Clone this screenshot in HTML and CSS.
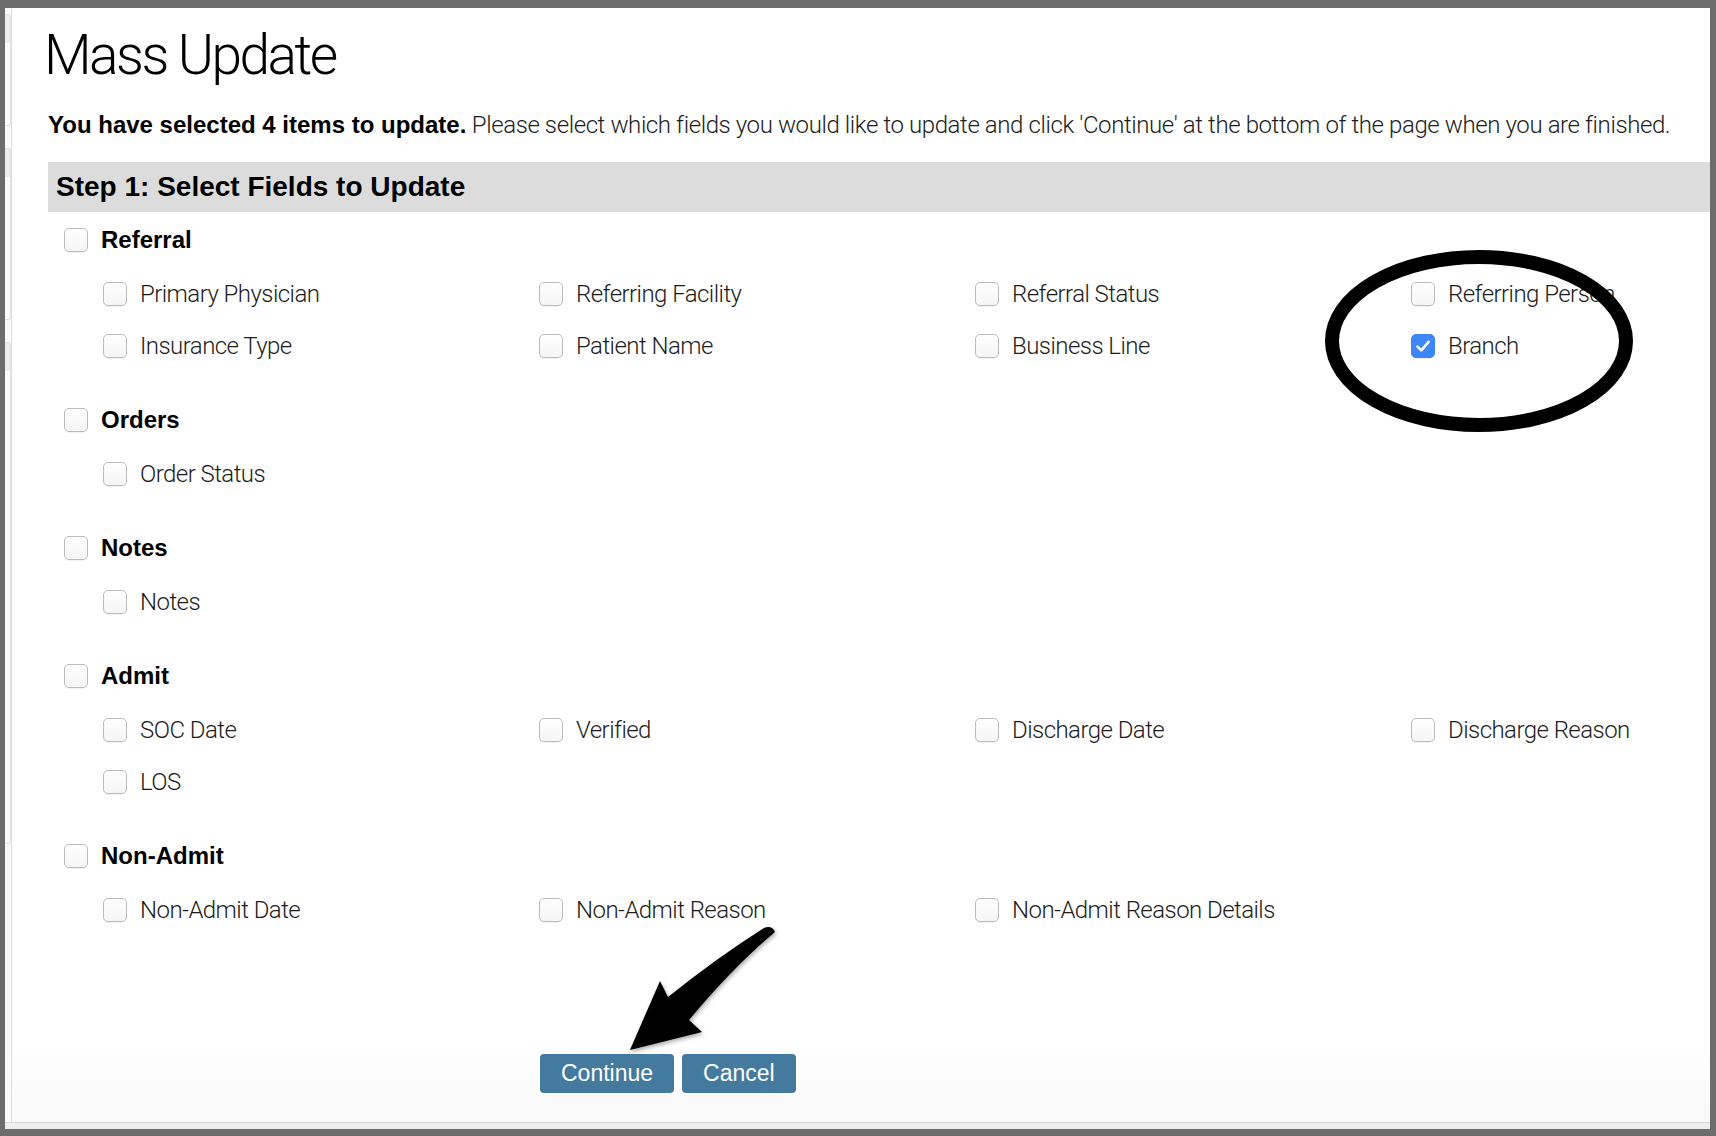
FILE: index.html
```html
<!DOCTYPE html>
<html lang="en">
<head>
<meta charset="utf-8">
<title>Mass Update</title>
<link rel="stylesheet" href="styles.css">
</head>
<body>
<div class="screen">
  <div class="window">
    <div class="edge">
      <span class="edge-tab t1"></span>
      <span class="edge-tab t2"></span>
      <span class="edge-tab t3"></span>
    </div>
    <main class="sheet">
      <h1 class="title">Mass Update</h1>
      <p class="intro"><strong>You have selected 4 items to update.</strong> Please select which fields you would like to update and click 'Continue' at the bottom of the page when you are finished.</p>
      <h2 class="step">Step 1: Select Fields to Update</h2>

      <section class="group">
        <label class="parent"><span class="box"></span>Referral</label>
        <div class="fields">
          <label class="field"><span class="box"></span>Primary Physician</label>
          <label class="field"><span class="box"></span>Referring Facility</label>
          <label class="field"><span class="box"></span>Referral Status</label>
          <label class="field"><span class="box"></span>Referring Person</label>
          <label class="field"><span class="box"></span>Insurance Type</label>
          <label class="field"><span class="box"></span>Patient Name</label>
          <label class="field"><span class="box"></span>Business Line</label>
          <label class="field"><span class="box on"><svg viewBox="0 0 24 24" width="24" height="24"><path d="M6.5 12.6 L10.3 16.4 L17.6 7.8" fill="none" stroke="#fff" stroke-width="2.6" stroke-linecap="round" stroke-linejoin="round"/></svg></span>Branch</label>
        </div>
      </section>

      <section class="group">
        <label class="parent"><span class="box"></span>Orders</label>
        <div class="fields">
          <label class="field"><span class="box"></span>Order Status</label>
        </div>
      </section>

      <section class="group">
        <label class="parent"><span class="box"></span>Notes</label>
        <div class="fields">
          <label class="field"><span class="box"></span>Notes</label>
        </div>
      </section>

      <section class="group">
        <label class="parent"><span class="box"></span>Admit</label>
        <div class="fields">
          <label class="field"><span class="box"></span>SOC Date</label>
          <label class="field"><span class="box"></span>Verified</label>
          <label class="field"><span class="box"></span>Discharge Date</label>
          <label class="field"><span class="box"></span>Discharge Reason</label>
          <label class="field"><span class="box"></span>LOS</label>
        </div>
      </section>

      <section class="group">
        <label class="parent"><span class="box"></span>Non-Admit</label>
        <div class="fields">
          <label class="field"><span class="box"></span>Non-Admit Date</label>
          <label class="field"><span class="box"></span>Non-Admit Reason</label>
          <label class="field"><span class="box"></span>Non-Admit Reason Details</label>
        </div>
      </section>

      <div class="actions">
        <button class="btn" type="button">Continue</button>
        <button class="btn" type="button">Cancel</button>
      </div>

      <!-- hand-drawn callouts on top of the form -->
      <svg class="marks" viewBox="12 8 1698 1114" width="1698" height="1114">
        <defs>
          <filter id="soft" x="-20%" y="-20%" width="140%" height="140%">
            <feDropShadow dx="1" dy="2" stdDeviation="2" flood-color="#000" flood-opacity="0.35"/>
          </filter>
        </defs>
        <ellipse cx="1479" cy="341" rx="147" ry="84" fill="none" stroke="#000" stroke-width="14"/>
        <path filter="url(#soft)" d="M630 1050 L660 981 L668 997 Q718 957 764 928 Q772 925 775 932 Q733 967 689 1020 L702 1032 Z" fill="#000"/>
      </svg>
    </main>
  </div>
  <div class="foot"></div>
</div>
</body>
</html>
```
FILE: styles.css
```css
html, body {
  margin: 0;
  padding: 0;
}

body {
  background: #6c6c6c;
  font-family: "Liberation Sans", Arial, sans-serif;
  color: #000;
}

.screen {
  width: 1716px;
  height: 1136px;
  box-sizing: border-box;
  padding: 8px 6px 0 5px;
  display: flex;
  flex-direction: column;
}

.window {
  display: flex;
  height: 1114px;
}

/* sliver of the neighbouring panel on the left */
.edge {
  flex: none;
  width: 6px;
  background: #fafafa;
  border-right: 1px solid #dedede;
  display: flex;
  flex-direction: column;
  gap: 22px;
  padding-top: 6px;
}

.edge-tab {
  display: block;
  border: 1px solid #e2e2e2;
  border-left: none;
  border-radius: 0 3px 3px 0;
  background: linear-gradient(#ececec 0, #ececec 28px, #fbfbfb 28px);
}

.edge-tab.t1 { height: 110px; }
.edge-tab.t2 { height: 170px; }
.edge-tab.t3 { height: 500px; }

.sheet {
  flex: 1;
  min-width: 0;
  overflow: hidden;
  position: relative;
  background: linear-gradient(#ffffff 0, #ffffff 93%, #f8f8f8 100%);
  padding: 15px 0 0 36px;
}

.foot {
  height: 6px;
  border-top: 1px solid #d8d8d8;
  background: #eeeeee;
}

.title {
  margin: 0 0 0 -4px;
  font-family: Roboto, "Liberation Sans", sans-serif;
  font-weight: 300;
  font-size: 55px;
  line-height: 64px;
  letter-spacing: -2.5px;
  color: #000;
}

.intro {
  margin: 23px 0 0;
  font-family: Roboto, "Liberation Sans", sans-serif;
  font-weight: 300;
  font-size: 24px;
  line-height: 30px;
  letter-spacing: -0.4px;
  white-space: nowrap;
  color: #1c1c1c;
}

.intro strong {
  font-family: "Liberation Sans", Arial, sans-serif;
  font-weight: 700;
  letter-spacing: 0;
  color: #000;
}

.step {
  margin: 22px 0 0;
  height: 50px;
  background: #dcdcdc;
  padding-left: 8px;
  font-size: 28px;
  line-height: 50px;
  font-weight: 700;
}

.group {
  margin-top: 50px;
}

.step + .group {
  margin-top: 16px;
}

.parent,
.field {
  display: flex;
  align-items: center;
  gap: 13px;
  height: 24px;
  white-space: nowrap;
}

.parent {
  padding-left: 16px;
  font-size: 24px;
  font-weight: 700;
}

.fields {
  margin-top: 30px;
  padding-left: 55px;
  display: grid;
  grid-template-columns: repeat(4, 436px);
  row-gap: 28px;
}

.field {
  font-family: Roboto, "Liberation Sans", sans-serif;
  font-weight: 300;
  font-size: 24px;
  letter-spacing: -0.55px;
  color: #1c1c1c;
}

.box {
  flex: none;
  width: 24px;
  height: 24px;
  box-sizing: border-box;
  border: 1px solid #bcbcbc;
  border-radius: 5px;
  background: linear-gradient(#ffffff, #f5f5f5);
  box-shadow: 0 1px 1px rgba(0, 0, 0, 0.06);
}

.box.on {
  border-color: #3a83f1;
  background: #3c87f5;
  display: flex;
}

.box svg {
  margin: -1px;
}

.actions {
  margin-top: 132px;
  padding-left: 492px;
  display: flex;
  gap: 8px;
}

.btn {
  height: 39px;
  padding: 0 21px;
  border: none;
  border-radius: 4px;
  background: #447a9d;
  color: #fff;
  font-family: "Liberation Sans", Arial, sans-serif;
  font-size: 23px;
  line-height: 39px;
}

.marks {
  position: absolute;
  left: 0;
  top: 0;
  pointer-events: none;
}
```
